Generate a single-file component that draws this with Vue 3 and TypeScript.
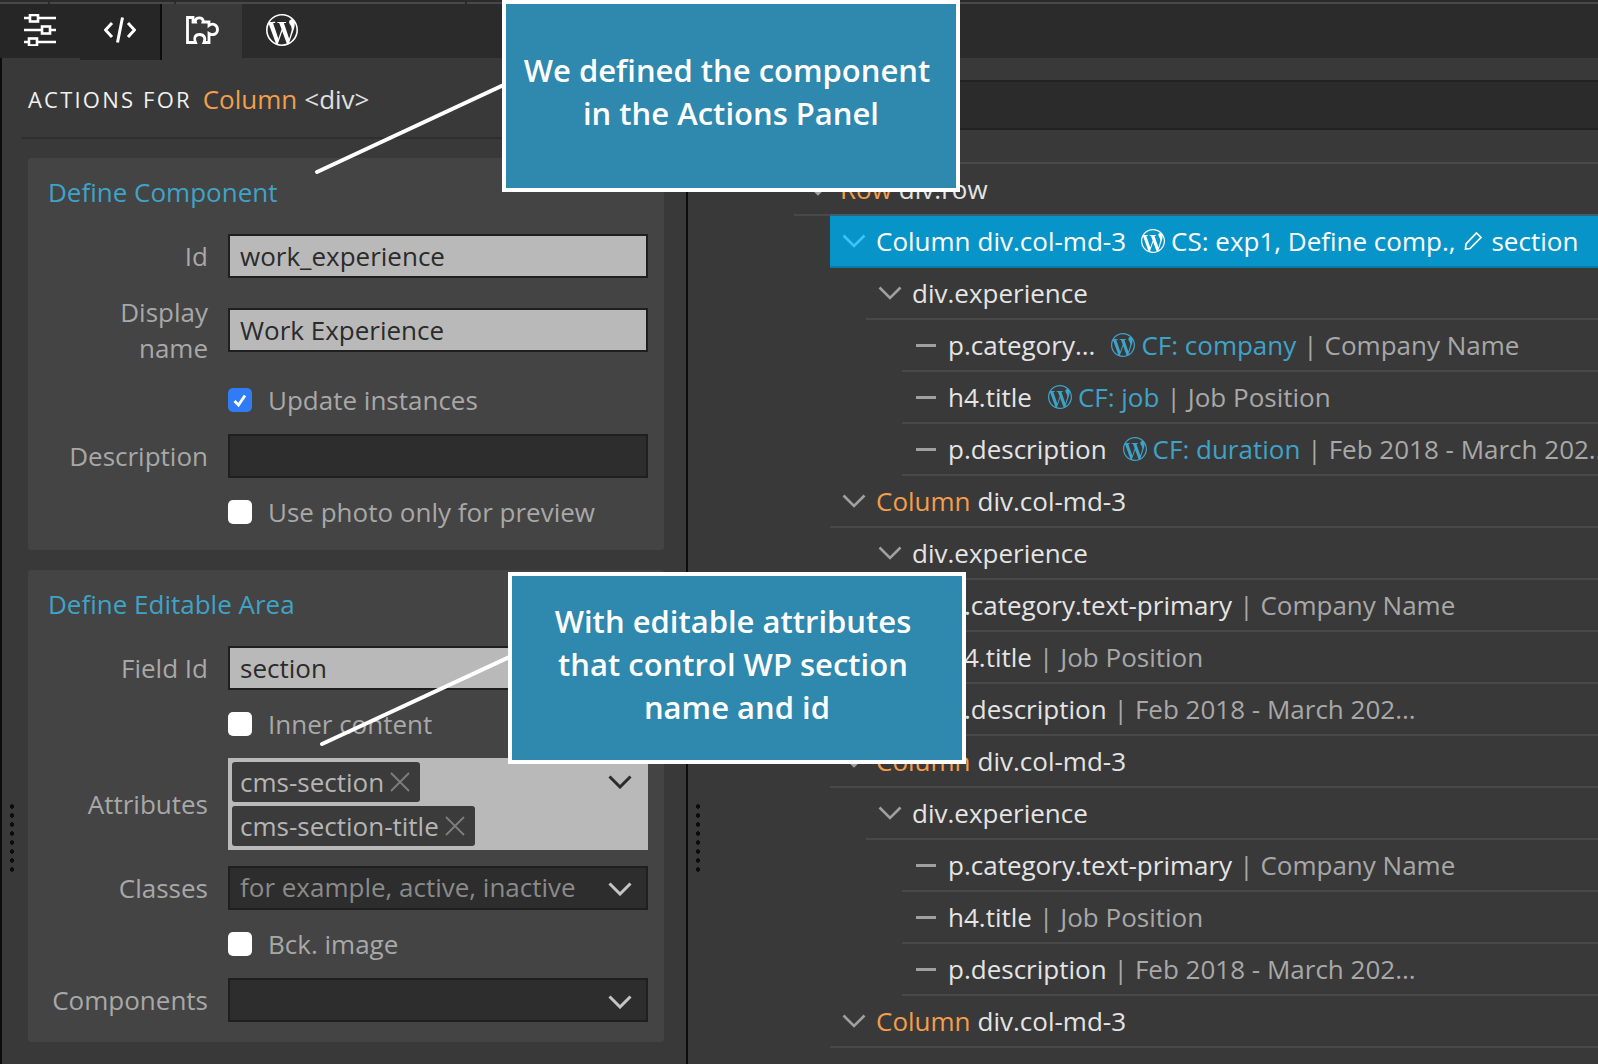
<script setup lang="ts">
interface Row { depth: number; kind: 'open' | 'leaf'; name?: string; tag: string; wp?: string; rest?: string; sel?: boolean }
const col = (sel = false): Row => ({ depth: 1, kind: 'open', name: 'Column', tag: 'div.col-md-3', sel })
const exp = (): Row => ({ depth: 2, kind: 'open', tag: 'div.experience' })
const plain: Row[] = [
  { depth: 3, kind: 'leaf', tag: 'p.category.text-primary', rest: 'Company Name' },
  { depth: 3, kind: 'leaf', tag: 'h4.title', rest: 'Job Position' },
  { depth: 3, kind: 'leaf', tag: 'p.description', rest: 'Feb 2018 - March 202...' },
]
const rows: Row[] = [
  { depth: 0, kind: 'open', name: 'Row', tag: 'div.row' },
  col(true), exp(),
  { depth: 3, kind: 'leaf', tag: 'p.category...', wp: 'CF: company', rest: 'Company Name' },
  { depth: 3, kind: 'leaf', tag: 'h4.title', wp: 'CF: job', rest: 'Job Position' },
  { depth: 3, kind: 'leaf', tag: 'p.description', wp: 'CF: duration', rest: 'Feb 2018 - March 202...' },
  col(), exp(), ...plain,
  col(), exp(), ...plain,
  col(), exp(),
]
const wpPath = 'M21.469 6.825c.84 1.537 1.318 3.3 1.318 5.175 0 3.979-2.156 7.456-5.363 9.325l3.295-9.527c.615-1.54.82-2.771.82-3.864 0-.405-.026-.78-.07-1.11m-7.981.105c.647-.03 1.232-.105 1.232-.105.582-.075.514-.93-.067-.899 0 0-1.755.135-2.88.135-1.064 0-2.85-.15-2.85-.15-.585-.03-.661.855-.075.885 0 0 .54.061 1.125.09l1.68 4.605-2.37 7.08L5.354 6.9c.649-.03 1.234-.1 1.234-.1.585-.075.516-.93-.065-.896 0 0-1.746.138-2.874.138-.2 0-.438-.008-.69-.015C4.911 3.15 8.235 1.215 12 1.215c2.809 0 5.365 1.072 7.286 2.833-.046-.003-.091-.009-.141-.009-1.06 0-1.812.923-1.812 1.914 0 .89.513 1.643 1.06 2.531.411.72.89 1.643.89 2.977 0 .915-.354 1.994-.821 3.479l-1.075 3.585-3.9-11.61.001.014zM12 22.784c-1.059 0-2.081-.153-3.048-.437l3.237-9.406 3.315 9.087c.024.053.05.101.078.149-1.12.393-2.325.609-3.582.609M1.211 12c0-1.564.336-3.05.935-4.39L7.29 21.709C3.694 19.96 1.212 16.271 1.211 12M12 0C5.385 0 0 5.385 0 12s5.385 12 12 12 12-5.385 12-12S18.615 0 12 0'
</script>

<template>
  <div class="page">
    <div class="topline"><span class="seg s1"></span><span class="seg s2"></span><span class="seg s3"></span><span class="seg s4"></span><span class="seg s5"></span></div>
    <div class="main">
      <aside class="left">
        <nav class="tabs">
          <div class="tab dark">
            <svg width="32" height="32" viewBox="0 0 32 32" fill="none" stroke="#fff" stroke-width="2.600">
              <path d="M0 4H6M14 4H32M0 16H18M26 16H32M0 28H5M13 28H32" />
              <rect x="6" y="1" width="8" height="6.500" /><rect x="18" y="12.500" width="8" height="7" /><rect x="5" y="24.500" width="8" height="7" />
            </svg>
          </div>
          <div class="tab dark sep">
            <svg width="32" height="28" viewBox="0 0 32 28" fill="none" stroke="#fff" stroke-width="3">
              <path d="M8 7 1.500 14 8 21M24 7l6.500 7-6.500 7M18.500 1.500 13.500 26.500" />
            </svg>
          </div>
          <div class="tab active">
            <svg width="33" height="28" viewBox="0 0 33 28" fill="none" stroke="#fff" stroke-width="2.800">
              <path d="M1.500 1.500H7V6H9.500C8 .5 18.500 .5 17 6H23V9.500C27 6.500 31.500 9 31.500 13.500 31.500 18 27 20 23 17.500V26.500H18C20 22 18 18.500 13.500 18.500 9 18.500 7.500 22 9.500 26.500H1.500Z" />
            </svg>
          </div>
          <div class="tab none">
            <svg width="32" height="32" viewBox="0 0 24 24" fill="#fff"><path :d="wpPath" /></svg>
          </div>
        </nav>
        <div class="panel">
          <header class="ptitle"><span class="caps">ACTIONS FOR</span><span class="orange">Column</span><span class="tagt">&lt;div&gt;</span></header>

          <section class="card first">
            <h3>Define Component</h3>
            <div class="field"><label>Id</label><div class="inp light">work_experience</div></div>
            <div class="field two"><label>Display<br />name</label><div class="inp light">Work Experience</div></div>
            <div class="check upd"><span class="box on"><svg width="16" height="15" viewBox="0 0 16 15" fill="none" stroke="#fff" stroke-width="2.800"><path d="M2.500 8 6.500 12 13 2.500" /></svg></span>Update instances</div>
            <div class="field desc"><label>Description</label><div class="inp dark"></div></div>
            <div class="check last"><span class="box"></span>Use photo only for preview</div>
          </section>

          <section class="card second">
            <h3>Define Editable Area</h3>
            <div class="field"><label>Field Id</label><div class="inp light">section</div></div>
            <div class="check inner"><span class="box"></span>Inner content</div>
            <div class="field attr"><label>Attributes</label>
              <div class="multi">
                <span class="chip">cms-section<svg width="22" height="22" viewBox="0 0 22 22" stroke="#7e7e7e" stroke-width="1.800"><path d="M2 2 20 20M20 2 2 20" /></svg></span>
                <span class="chip">cms-section-title<svg width="22" height="22" viewBox="0 0 22 22" stroke="#7e7e7e" stroke-width="1.800"><path d="M2 2 20 20M20 2 2 20" /></svg></span>
                <svg class="caret top" width="24" height="14" viewBox="0 0 24 14" fill="none" stroke="#2c2c2c" stroke-width="3"><path d="M1.500 1.500 12 12 22.500 1.500" /></svg>
              </div>
            </div>
            <div class="field cls"><label>Classes</label><div class="inp dark ph">for example, active, inactive<svg class="caret" width="24" height="14" viewBox="0 0 24 14" fill="none" stroke="#c4c4c4" stroke-width="3"><path d="M1.500 1.500 12 12 22.500 1.500" /></svg></div></div>
            <div class="check bck"><span class="box"></span>Bck. image</div>
            <div class="field"><label>Components</label><div class="inp dark ph"><svg class="caret cmp" width="24" height="14" viewBox="0 0 24 14" fill="none" stroke="#c4c4c4" stroke-width="3"><path d="M1.500 1.500 12 12 22.500 1.500" /></svg></div></div>
          </section>
        </div>
        <div class="grip g1"></div>
      </aside>

      <main class="right">
        <div class="rtop"></div>
        <div class="rband a"></div>
        <div class="rband b"></div>
        <div class="rband c"></div>
        <div class="grip g2"></div>
        <div v-for="(r, i) in rows" :key="i" class="row" :class="['d' + r.depth, { sel: r.sel }]">
          <div class="rowin">
            <svg v-if="r.kind === 'open'" class="chev" width="24" height="14" viewBox="0 0 24 14" fill="none" stroke-width="2.600"><path d="M1.500 1.500 12 12 22.500 1.500" /></svg>
            <span v-else class="dash"></span>
            <span v-if="r.name" class="nm">{{ r.name }}</span>
            <span class="tg">{{ r.tag }}</span>
            <template v-if="r.sel">
              <svg class="wp" width="24" height="24" viewBox="0 0 24 24" fill="#fff"><path :d="wpPath" /></svg>
              <span class="tg cs">CS: exp1, Define comp.,</span>
              <svg class="pen" width="20" height="20" viewBox="0 0 20 20" fill="none" stroke="#fff" stroke-width="1.700"><path d="M13.500 2 18 6.500 7 17.500 2.500 18 3 13Z" /></svg>
              <span class="tg">section</span>
            </template>
            <template v-if="r.wp">
              <svg class="wp" width="24" height="24" viewBox="0 0 24 24" fill="#3fa3c8"><path :d="wpPath" /></svg>
              <span class="cf">{{ r.wp }}</span>
            </template>
            <template v-if="r.rest"><span class="pipe">|</span><span class="rest">{{ r.rest }}</span></template>
          </div>
        </div>
      </main>
    </div>

    <svg class="lines" width="1598" height="1064" viewBox="0 0 1598 1064" fill="none" stroke="#fff" stroke-width="4" stroke-linecap="round">
      <path d="M317 172 510 82M322 744 516 654" />
    </svg>
    <div class="callout c1">We defined the component&nbsp;<br />in the Actions Panel</div>
    <div class="callout c2">With editable attributes&nbsp;<br />that control WP section&nbsp;<br />name and id</div>
  </div>
</template>

<style>
html, body { margin: 0; background: #393939; }
</style>

<style scoped>
.page { position: relative; width: 1598px; height: 1064px; overflow: hidden; background: #393939; font-family: "Open Sans", sans-serif; color: #e4e4e4; font-size: 26px; }
.topline { height: 4px; padding-top: 2px; box-sizing: border-box; background: #2b2b2b; display: flex; gap: 2px; }
.seg { height: 2px; background: #484848; }
.s1 { width: 48px; } .s2 { width: 124px; } .s3 { width: 289px; } .s4 { width: 290px; } .s5 { flex: 1; }
.main { display: flex; height: 1060px; }
.left { position: relative; width: 688px; flex: none; border-right: 2px solid #0c0c0c; box-sizing: border-box; }
.tabs { display: flex; height: 54px; background: #2b2b2b; }
.tab { width: 80px; display: flex; align-items: center; justify-content: center; box-sizing: border-box; padding-bottom: 2px; }
.tab.dark { background: #262626; }
.tab.sep { border-right: 2px solid #0c0c0c; width: 82px; margin-bottom: -2px; padding-bottom: 4px; }
.tab.active { background: #393939; }
.panel { border-left: 2px solid #0c0c0c; height: 1006px; padding: 0 22px 0 20px; }
.ptitle { height: 81px; margin-right: -22px; border-bottom: 2px solid #2e2e2e; display: flex; align-items: center; padding-left: 6px; padding-top: 2px; box-sizing: border-box; gap: 7px; }
.caps { font-size: 22px; letter-spacing: 2.200px; color: #f0f0f0; margin-right: 4px; }
.orange { color: #f19e4d; }
.tagt { color: #e0e0e0; }
.card { background: #444; margin: 19px 0 0 6px; border-radius: 3px; padding: 16px 16px 0 0; box-sizing: border-box; }
.card.first { height: 392px; }
.card.second { height: 472px; margin-top: 20px; }
h3 { margin: 0 0 24px 20px; font-size: 26px; font-weight: 400; color: #3fa3c8; line-height: 36px; }
.field { display: flex; align-items: center; }
label { width: 180px; flex: none; text-align: right; color: #a8a8a8; line-height: 36px; margin-right: 20px; }
.inp { flex: 1; height: 44px; box-sizing: border-box; border: 2px solid #1f1f1f; padding: 0 10px; line-height: 40px; position: relative; white-space: nowrap; }
.inp.light { background: #b9b9b9; color: #2b2b2b; }
.inp.dark { background: #2d2d2d; }
.inp.ph { color: #8a8a8a; line-height: 38px; }
.field.two { margin-top: 16px; }
.check { display: flex; align-items: center; gap: 16px; margin-left: 200px; color: #a8a8a8; height: 36px; }
.box { width: 24px; height: 24px; border-radius: 5px; background: #fff; display: flex; align-items: center; justify-content: center; flex: none; }
.box.on { background: #2f7cf6; }
.check.upd { margin-top: 16px; }
.field.desc { margin-top: 16px; }
.check.last { margin-top: 16px; }
.check.inner { margin-top: 16px; }
.multi { flex: 1; position: relative; background: #b9b9b9; height: 92px; box-sizing: border-box; padding: 4px; display: flex; flex-direction: column; gap: 4px; align-items: flex-start; }
.chip { display: inline-flex; align-items: center; gap: 5px; height: 40px; background: #3b3b3b; border-radius: 3px; padding: 0 9px 0 8px; color: #b5b5b5; box-sizing: border-box; }
.field.attr { margin-top: 16px; }
.field.cls { margin-top: 16px; }
.check.bck { margin-top: 16px; margin-bottom: 16px; }
.caret { position: absolute; right: 14px; top: 14px; }
.caret.cmp { top: 15px; }
.caret.top { top: 17px; right: 16px; }
.right { flex: 1; min-width: 0; position: relative; }
.rtop { height: 54px; background: #2b2b2b; }
.rband { box-sizing: border-box; border-bottom: 2px solid #222; }
.rband.a { height: 24px; background: #393939; }
.rband.b { height: 48px; background: #2b2b2b; }
.rband.c { height: 34px; background: #393939; border-bottom-color: #4a4a4a; }
.row { height: 52px; box-sizing: border-box; display: flex; justify-content: flex-end; }
.rowin { flex: 1; display: flex; align-items: center; border-bottom: 2px solid #484848; white-space: nowrap; overflow: hidden; box-sizing: border-box; min-width: 0; padding-left: 12px; }
.row.d0 { padding-left: 106px; }
.row.d1 { padding-left: 142px; }
.row.d2 { padding-left: 178px; }
.row.d3 { padding-left: 214px; }
.row.d3 .rowin { padding-left: 14px; }
.chev { stroke: #a0a0a0; margin-right: 10px; flex: none; }
.dash { width: 20px; height: 3px; background: #a0a0a0; margin-right: 12px; flex: none; }
.nm { color: #f19e4d; margin-right: 7px; }
.tg { color: #e4e4e4; }
.wp { margin: 0 6px 0 15px; flex: none; }
.row.d3 .wp { margin-left: 16px; }
.cf { color: #3fa3c8; }
.pipe { color: #a8a8a8; margin: 0 7px; }
.rest { color: #a8a8a8; }
.row.sel .rowin { background: #0795c9; border-bottom: 2px solid #0a7ba6; }
.row.sel { position: relative; }
.row.sel .rowin { box-shadow: 0 -2px 0 #3d5f70; overflow: visible; }
.row.sel .chev { stroke: #3cc4f5; }
.row.sel .nm, .row.sel .tg { color: #fff; }
.pen { margin: 0 8px; flex: none; }
.grip { position: absolute; width: 4px; height: 72px; background: radial-gradient(circle, #0c0c0c 2px, transparent 2.400px) 0 0 / 4px 9px repeat-y; }
.g1 { left: 10px; top: 798px; }
.g2 { left: 8px; top: 798px; }
.callout { position: absolute; background: #2f88ad; border: 4px solid #fff; box-sizing: border-box; color: #fff; font-weight: 600; font-size: 31px; text-align: center; line-height: 43px; }
.c1 { left: 502px; top: 0; width: 458px; height: 192px; padding-top: 45px; }
.c2 { left: 508px; top: 572px; width: 458px; height: 192px; padding-top: 24px; }
.lines { position: absolute; left: 0; top: 0; pointer-events: none; }
</style>
